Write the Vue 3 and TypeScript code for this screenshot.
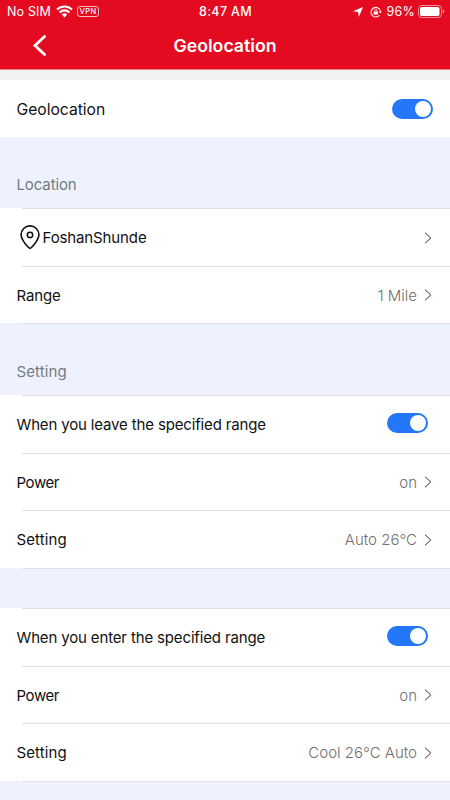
<script setup lang="ts">
import { ref } from 'vue'

interface Row {
  kind: 'row' | 'heading' | 'gap'
  label?: string
  value?: string
  toggle?: boolean
  pin?: boolean
  height: number
}

const enabled = ref(true)

const rows = ref<Row[]>([
  { kind: 'heading', label: 'Location', height: 71 },
  { kind: 'row', label: 'FoshanShunde', value: '', pin: true, height: 58 },
  { kind: 'row', label: 'Range', value: '1 Mile', height: 57 },
  { kind: 'heading', label: 'Setting', height: 72 },
  { kind: 'row', label: 'When you leave the specified range', toggle: true, height: 58 },
  { kind: 'row', label: 'Power', value: 'on', height: 57 },
  { kind: 'row', label: 'Setting', value: 'Auto 26°C', height: 58 },
  { kind: 'gap', height: 40 },
  { kind: 'row', label: 'When you enter the specified range', toggle: true, height: 58 },
  { kind: 'row', label: 'Power', value: 'on', height: 57 },
  { kind: 'row', label: 'Setting', value: 'Cool 26°C Auto', height: 58 },
  { kind: 'gap', height: 19 },
])

function labelClass(row: Row) {
  return {
    sentence: row.toggle !== undefined,
    place: row.pin,
    loose: row.label === 'Setting',
    tight: row.label === 'Power',
  }
}
</script>

<template>
  <div class="screen">
    <header class="top">
      <div class="status">
        <div class="side">
          <span class="carrier">No SIM</span>
          <svg class="wifi" width="17" height="13" viewBox="0 0 17 13" fill="none" stroke="#fff">
            <path d="M1 4.6a10.6 10.6 0 0 1 15 0" stroke-width="2.1" />
            <path d="M3.6 7.4a6.9 6.9 0 0 1 9.8 0" stroke-width="2.1" />
            <path d="M8.5 12.4 5.9 9.6a3.7 3.7 0 0 1 5.2 0z" fill="#fff" stroke="none" />
          </svg>
          <span class="vpn">VPN</span>
        </div>
        <span class="clock">8:47 AM</span>
        <div class="side end">
          <svg class="arrow" width="10" height="10" viewBox="0 0 10 10"><path d="M10 0 5.8 10 5 5.1 0 4.3z" fill="#fff" /></svg>
          <svg class="lock" width="12" height="12" viewBox="0 0 12 12" fill="none" stroke="#fff">
            <path d="M9.5 9.4A4.8 4.8 0 1 1 10.4 4.6" stroke-width="1.1" />
            <path d="M8.8 5.2h3.1L10.4 7.5z" fill="#fff" stroke="none" />
            <path d="M3.7 5.5h4.2v3.1H3.7z" fill="#fff" stroke="none" />
            <path d="M4.6 5.6V4.5a1.2 1.2 0 0 1 2.4 0v1.1" stroke-width=".8" />
          </svg>
          <span class="percent">96%</span>
          <svg width="27" height="13" viewBox="0 0 27 13">
            <rect x=".5" y=".5" width="23" height="12" rx="3.3" fill="none" stroke="#f5919c" />
            <rect x="2" y="2" width="19.5" height="9" rx="1.8" fill="#fff" />
            <path d="M24.8 4.5c2 .5 2 3.5 0 4z" fill="#f5919c" />
          </svg>
        </div>
      </div>
      <div class="nav">
        <svg class="back" width="16" height="24" viewBox="0 0 16 24"><path d="M12.6 2.4 3 11.5l9.6 9.1" fill="none" stroke="#fff" stroke-width="2.8" stroke-linecap="round" /></svg>
        <h1>Geolocation</h1>
      </div>
    </header>
    <div class="strip"></div>
    <section class="master">
      <span class="label lead">Geolocation</span>
      <button class="switch" :class="{ on: enabled }" aria-label="Geolocation" @click="enabled = !enabled"><i></i></button>
    </section>
    <main>
      <div v-for="(row, i) in rows" :key="i" class="item" :class="[row.kind, { first: i === 0 }]" :style="{ height: row.height + 'px' }">
        <svg v-if="row.pin" class="pin" width="20" height="25" viewBox="0 0 20 25" fill="none" stroke="#111">
          <path d="M10 23.4C8.7 23.4 1.1 15.2 1.1 9.6a8.9 8.7 0 0 1 17.8 0C18.9 15.2 11.3 23.4 10 23.4z" stroke-width="1.6" />
          <circle cx="10" cy="9.9" r="2.7" stroke-width="1.5" />
        </svg>
        <span v-if="row.label" class="label" :class="labelClass(row)">{{ row.label }}</span>
        <button v-if="row.kind === 'row' && row.toggle !== undefined" class="switch inset" :class="{ on: row.toggle }" :aria-label="row.label" @click="row.toggle = !row.toggle"><i></i></button>
        <template v-else-if="row.kind === 'row'">
          <span class="value">{{ row.value }}</span>
          <svg class="chevron" width="8" height="12" viewBox="0 0 8 12"><path d="M1 .7 6.8 6 1 11.3" fill="none" stroke="#333" stroke-width="1" /></svg>
        </template>
      </div>
    </main>
  </div>
</template>

<style>
body { margin: 0; }
</style>

<style scoped>
.screen {
  width: 450px;
  height: 800px;
  overflow: hidden;
  background: #fff;
  font-family: Inter, "Liberation Sans", sans-serif;
  color: #111;
}
.top { height: 69px; background: #e40b20; color: #fff; border-bottom: 1px solid #ed7c87; }
.status {
  display: grid;
  grid-template-columns: 1fr auto 1fr;
  align-items: center;
  height: 23px;
  padding: 0 5px 0 7px;
  font-size: 12px;
}
.side { display: flex; align-items: center; }
.end { justify-content: flex-end; }
.carrier { letter-spacing: .15px; font-size: 12.5px; }
.wifi { margin-left: 5px; }
.vpn {
  box-sizing: border-box;
  width: 22px;
  height: 11px;
  margin-left: 4px;
  border: 1px solid #f9bcc2;
  border-radius: 3px;
  font-size: 7.5px;
  font-weight: 500;
  line-height: 9px;
  text-align: center;
  letter-spacing: .4px;
}
.clock { margin-right: 1px; font-weight: 500; font-size: 12.5px; letter-spacing: .35px; }
.arrow { margin-right: 7px; }
.lock { margin-right: 5px; }
.percent { margin-right: 3px; font-size: 12.5px; letter-spacing: .2px; }
.nav {
  display: grid;
  grid-template-columns: 60px 1fr 60px;
  align-items: center;
  height: 45px;
}
.back { justify-self: end; margin-right: 12px; }
h1 { margin: 0; font-size: 17.7px; font-weight: 570; text-align: center; }
.strip { height: 10px; background: #f2f2f2; }
.master {
  display: flex;
  align-items: center;
  justify-content: space-between;
  height: 56px;
  padding: 1px 17px 0 16.5px;
}
.item {
  box-sizing: border-box;
  display: flex;
  align-items: center;
  padding: 1px 18px 0 16.5px;
  background: linear-gradient(#e0e1e5, #e0e1e5) 22px 0 / 428px 1px no-repeat;
}
.heading, .gap { background-color: #edf2fe; }
.heading { align-items: flex-end; padding-bottom: 13px; color: #777a82; }
.first { background-image: none; }
.label { flex: none; font-size: 15px; line-height: 21px; font-weight: 370; letter-spacing: -.12px; }
.lead { font-size: 15.7px; letter-spacing: -.03px; }
.sentence { letter-spacing: -.15px; }
.loose { letter-spacing: .1px; }
.tight { letter-spacing: -.4px; }
.value { margin-left: auto; font-size: 15px; line-height: 21px; font-weight: 360; color: #707070; letter-spacing: 0; }
.chevron { margin-left: 7px; }
.pin { margin-left: 3.5px; margin-right: 2.5px; }
.switch {
  box-sizing: border-box;
  width: 41px;
  height: 20px;
  padding: 2px;
  display: flex;
  border: 0;
  border-radius: 10px;
  background: #ccc;
}
.switch.on { justify-content: flex-end; background: #2377f8; }
.switch i { width: 16px; height: 16px; border-radius: 50%; background: #fff; }
.inset { margin-left: auto; margin-right: 4px; margin-bottom: 3px; }
</style>
